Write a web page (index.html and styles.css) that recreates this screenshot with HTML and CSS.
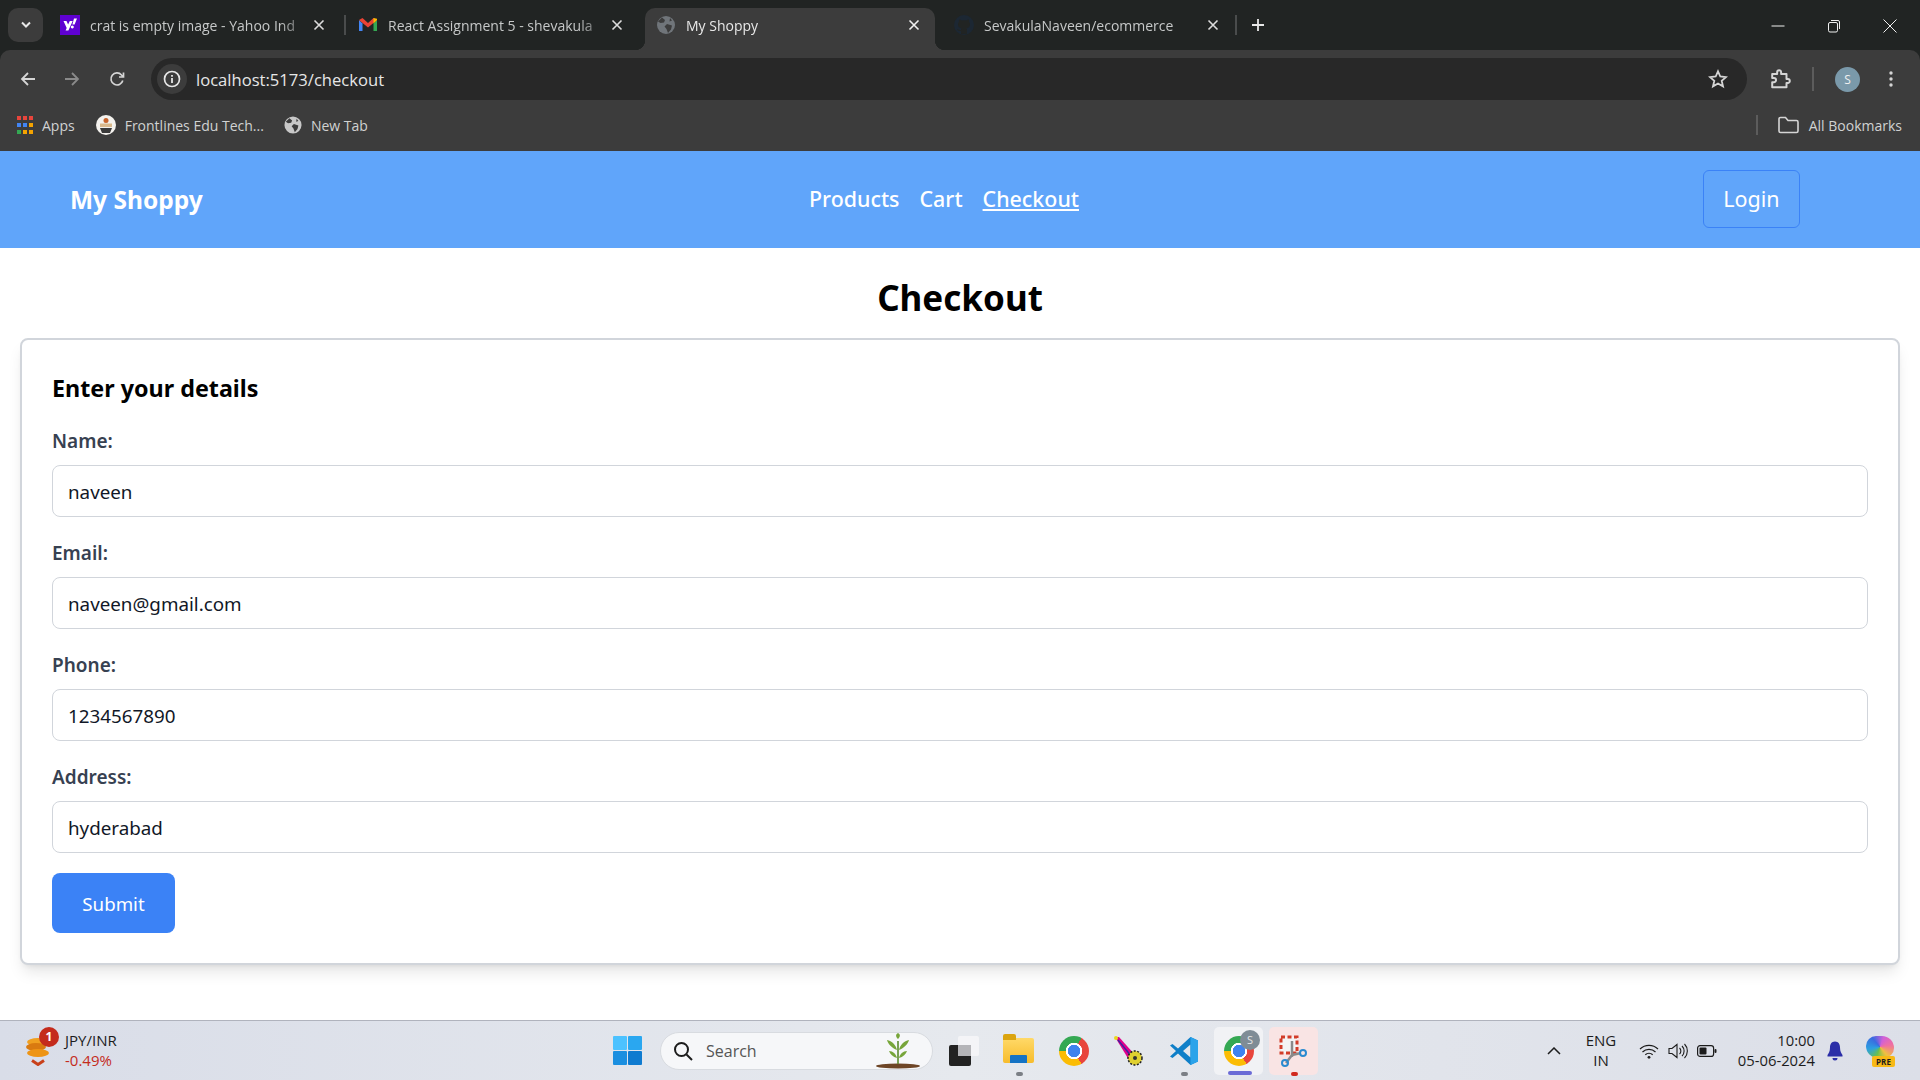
FILE: index.html
```html
<!DOCTYPE html>
<html lang="en">
<head>
    <meta name="viewport" content="width=device-width, initial-scale=1">
    <title>My Shoppy</title>
    <link rel="stylesheet" href="styles.css">
</head>

<body>

    <!-- browser tabs -->
    <div class="tab-strip">
        <div class="tab-search"><svg width="12" height="8" viewBox="0 0 12 8"><path d="M2 1.500 6 5.500 10 1.500" fill="none" stroke="#e8e8e8" stroke-width="2"/></svg></div>

        <div class="tab">
            <svg class="favicon" viewBox="0 0 20 20"><rect width="20" height="20" fill="#5f01d1"/><path d="M3.500 6h3l1.600 3.600L9.800 6h2.900L8.400 15.500H5.600l1.100-2.600z" fill="#fff"/><path d="M14 3.500h3l-2.400 6h-2.200zM12.300 10.500a1.500 1.500 0 1 0 .01 0z" fill="#fff"/></svg>
            <span class="tab-title">crat is empty image - Yahoo Ind</span>
            <svg class="tab-close" viewBox="0 0 12 12"><path d="M1.500 1.500 10.500 10.500M10.500 1.500 1.500 10.500" stroke="#dcdcdc" stroke-width="1.600"/></svg>
        </div>
        <div class="tab-sep"></div>
        <div class="tab">
            <svg class="favicon" viewBox="0 0 20 20"><path d="M1 5v11h3.500V8.500z" fill="#4285f4"/><path d="M15.500 8.500V16H19V5z" fill="#34a853"/><path d="M1 5 4.500 3 10 8 15.500 3 19 5 10 12.500z" fill="#ea4335"/><path d="M15.500 3 19 3.800V5l-3.500 3.500z" fill="#fbbc04"/></svg>
            <span class="tab-title">React Assignment 5 - shevakula</span>
            <svg class="tab-close" viewBox="0 0 12 12"><path d="M1.500 1.500 10.500 10.500M10.500 1.500 1.500 10.500" stroke="#dcdcdc" stroke-width="1.600"/></svg>
        </div>
        <div class="tab active">
            <svg class="favicon" viewBox="0 0 20 20"><circle cx="10" cy="10" r="9" fill="#70757a"/><path d="M6 2.500 9 5 8 7.500 4.500 8 2 6.500zM11 9l5 1.500-1 4-3 3.500-1.500-4-2-2.500zM14 3l2 2.500-2.500 1z" fill="#3c3c3c"/></svg>
            <span class="tab-title">My Shoppy</span>
            <svg class="tab-close" viewBox="0 0 12 12"><path d="M1.500 1.500 10.500 10.500M10.500 1.500 1.500 10.500" stroke="#f0f0f0" stroke-width="1.600"/></svg>
        </div>
        <div class="tab">
            <svg class="favicon" viewBox="0 0 20 20"><circle cx="10" cy="10" r="10" fill="#1c2733"/><path d="M7 19v-3c-2.500.5-3.500-1-4-2 1.500 0 1.800 1.500 4 1 0-1 .3-1.500.6-1.800C5 12.800 4 11.500 4 9.300c0-1 .3-1.800 1-2.500-.2-.6-.2-1.500.1-2.300 1 0 1.800.4 2.600 1a8 8 0 0 1 4.600 0c.8-.6 1.600-1 2.600-1 .3.800.3 1.700.1 2.300.7.700 1 1.500 1 2.500 0 2.200-1 3.500-3.600 3.900.4.400.6 1 .6 1.800v3.800z" fill="#212423"/></svg>
            <span class="tab-title">SevakulaNaveen/ecommerce</span>
            <svg class="tab-close" viewBox="0 0 12 12"><path d="M1.500 1.500 10.500 10.500M10.500 1.500 1.500 10.500" stroke="#dcdcdc" stroke-width="1.600"/></svg>
        </div>
        <div class="tab-sep last"></div>
        <svg class="new-tab" viewBox="0 0 14 14"><path d="M7 1v12M1 7h12" stroke="#e8e8e8" stroke-width="1.800"/></svg>

        <div class="window-btns">
            <svg viewBox="0 0 14 14"><path d="M0.500 7h13" stroke="#f0f0f0" stroke-width="1"/></svg>
            <svg viewBox="0 0 14 14"><rect x="1.500" y="3.500" width="9" height="9.500" rx="1.500" fill="none" stroke="#f0f0f0"/><path d="M4 1.500h7a1.500 1.500 0 0 1 1.500 1.500v7" fill="none" stroke="#f0f0f0"/></svg>
            <svg viewBox="0 0 14 14"><path d="M.5.500 13.500 13.500M13.500.500.500 13.500" stroke="#f0f0f0" stroke-width="1"/></svg>
        </div>
    </div>

    <!-- address bar and bookmarks -->
    <div class="browser-bar">
        <div class="toolbar">
            <svg class="tool-btn" viewBox="0 0 16 16"><path d="M15 8H2M8 2 2 8l6 6" fill="none" stroke="#d5d5d5" stroke-width="1.800"/></svg>
            <svg class="tool-btn" viewBox="0 0 16 16"><path d="M1 8h13M8 2l6 6-6 6" fill="none" stroke="#8a8a8a" stroke-width="1.800"/></svg>
            <svg class="tool-btn reload" viewBox="0 0 16 16"><path d="M13.800 9.500A6 6 0 1 1 12.500 4L14.500 6M14.500 1.500V6H10" fill="none" stroke="#d5d5d5" stroke-width="1.700"/></svg>
            <div class="address">
                <div class="site-info"><svg width="18" height="18" viewBox="0 0 18 18"><circle cx="9" cy="9" r="7.500" fill="none" stroke="#e6e6e6" stroke-width="1.700"/><path d="M9 8v5M9 5v1.800" stroke="#e6e6e6" stroke-width="1.800"/></svg></div>
                <span class="url">localhost:5173/checkout</span>
                <svg class="star" viewBox="0 0 20 20"><path d="M10 2.300 12.300 7.500l5.700.6-4.300 3.700 1.300 5.600L10 14.500l-5 2.900 1.300-5.600L2 8.100l5.700-.6z" fill="none" stroke="#d5d5d5" stroke-width="1.800"/></svg>
            </div>
            <svg class="ext-icon" viewBox="0 0 20 20"><path d="M2 6h4.500V4.300a1.800 1.800 0 0 1 3.600 0V6H15v4.500h1.200a1.800 1.800 0 0 1 0 3.600H15V18H2v-4.500h1.500a2 2 0 0 0 0-4H2z" transform="translate(0 -.5)" fill="none" stroke="#d5d5d5" stroke-width="1.800" stroke-linejoin="round"/></svg>
            <div class="tool-sep"></div>
            <div class="avatar">S</div>
            <svg class="dots" viewBox="0 0 4 18"><circle cx="2" cy="3" r="1.700" fill="#d5d5d5"/><circle cx="2" cy="9" r="1.700" fill="#d5d5d5"/><circle cx="2" cy="15" r="1.700" fill="#d5d5d5"/></svg>
        </div>

        <div class="bookmarks">
            <div class="bookmark apps">
                <svg width="16" height="18" viewBox="0 0 16 18"><g fill="#e8453c"><rect width="4" height="4"/><rect x="6" width="4" height="4"/><rect x="12" width="4" height="4"/></g><g fill="#4285f4"><rect y="7" width="4" height="4"/><rect x="6" y="7" width="4" height="4"/></g><rect x="12" y="7" width="4" height="4" fill="#f4a300"/><rect y="14" width="4" height="4" fill="#34a853"/><g fill="#f4a300"><rect x="6" y="14" width="4" height="4"/><rect x="12" y="14" width="4" height="4"/></g></svg>
                <span>Apps</span>
            </div>
            <div class="bookmark frontlines">
                <svg width="20" height="20" viewBox="0 0 20 20"><circle cx="10" cy="10" r="10" fill="#f4f2ee"/><circle cx="10" cy="5.500" r="2.500" fill="#c8642c"/><rect x="4" y="8.500" width="12" height="3.500" fill="#d9b98c"/><path d="M4 13h12l-2 5H6z" fill="#3a3a3a"/></svg>
                <span>Frontlines Edu Tech...</span>
            </div>
            <div class="bookmark newtab">
                <svg width="18" height="18" viewBox="0 0 20 20"><circle cx="10" cy="10" r="9.500" fill="#c8c8c8"/><path d="M6 2.500 9 5 8 7.500 4.500 8 2 6.500zM11 9l5 1.500-1 4-3 3.500-1.500-4-2-2.500zM14 3l2 2.500-2.500 1z" fill="#3c3c3c"/></svg>
                <span>New Tab</span>
            </div>
            <div class="all-bookmarks">
                <div class="tool-sep"></div>
                <svg width="21" height="18" viewBox="0 0 21 18"><path d="M1 3a1.500 1.500 0 0 1 1.500-1.500h5L10 4.500h8.500A1.500 1.500 0 0 1 20 6v9a1.500 1.500 0 0 1-1.500 1.500h-16A1.500 1.500 0 0 1 1 15z" fill="none" stroke="#d5d5d5" stroke-width="1.600"/></svg>
                <span>All Bookmarks</span>
            </div>
        </div>
    </div>

    <!-- the page itself -->
    <nav class="navbar">
        <a class="brand">My Shoppy</a>
        <div class="nav-links">
            <a>Products</a>
            <a>Cart</a>
            <a class="current">Checkout</a>
        </div>
        <button class="login-btn">Login</button>
    </nav>

    <main class="content">
        <h1>Checkout</h1>
        <form class="checkout-card">
            <h2>Enter your details</h2>
            <div class="field">
                <label for="name">Name:</label>
                <input id="name" type="text" value="naveen">
            </div>
            <div class="field">
                <label for="email">Email:</label>
                <input id="email" type="text" value="naveen@gmail.com">
            </div>
            <div class="field">
                <label for="phone">Phone:</label>
                <input id="phone" type="text" value="1234567890">
            </div>
            <div class="field">
                <label for="address">Address:</label>
                <input id="address" type="text" value="hyderabad">
            </div>
            <button type="button" class="submit-btn">Submit</button>
        </form>
    </main>

    <!-- windows taskbar -->
    <footer class="taskbar">
        <div class="ticker">
            <div class="coins">
                <svg width="24" height="30" viewBox="0 0 24 30"><ellipse cx="12" cy="6" rx="11" ry="4" fill="#f0a020"/><ellipse cx="10" cy="11" rx="10" ry="4" fill="#d97a10"/><ellipse cx="12" cy="17" rx="11" ry="4" fill="#ee9414"/><path d="M6 24.500 12 28.500 18 24.500" fill="none" stroke="#c8401a" stroke-width="3"/></svg>
                <span class="badge">1</span>
            </div>
            <div class="ticker-text">
                <span>JPY/INR</span>
                <span class="down">-0.49%</span>
            </div>
        </div>

        <div class="task-icons">
            <svg class="win-logo" viewBox="0 0 29 29"><rect width="14" height="14" rx="1" fill="#4cc2ff"/><rect x="15" width="14" height="14" rx="1" fill="#2aa7f0"/><rect y="15" width="14" height="14" rx="1" fill="#1b8fe0"/><rect x="15" y="15" width="14" height="14" rx="1" fill="#0f7bd0"/></svg>
            <div class="search-box">
                <svg width="20" height="20" viewBox="0 0 20 20"><circle cx="8.500" cy="8.500" r="6.500" fill="none" stroke="#1c1c1c" stroke-width="2"/><path d="M13.500 13.500 19 19" stroke="#1c1c1c" stroke-width="2"/></svg>
                <span>Search</span>
                <svg class="plant" width="46" height="36" viewBox="0 0 46 36"><ellipse cx="23" cy="33" rx="22" ry="2.500" fill="#6d4526"/><path d="M23 31V8" stroke="#5c8a2c" stroke-width="1.600"/><path d="M23 6c-3-3-2-5 0-6 2 1 3 3 0 6zM22 17C17 15 13 11 12 7c5 1 9 5 10 10zM24 17c1-5 5-9 10-10-1 4-5 8-10 10zM22 25c-4-1-7-4-8-7 4 0 7 3 8 7zM24 25c1-4 4-7 8-7-1 3-4 6-8 7z" fill="#77a53a"/></svg>
            </div>
            <div class="task-view"><span class="back"></span><span class="front"></span></div>

            <div class="task-app"><div class="folder"><span class="folder-tab"></span><span class="folder-slot"></span></div><i class="dot"></i></div>
            <div class="task-app"><div class="chrome"></div></div>
            <div class="task-app">
                <svg width="30" height="30" viewBox="0 0 30 30"><path d="M1 1 5 1 21 19 15 24z" fill="#e0008c"/><path d="M4 4 18 21" stroke="#4020a0" stroke-width="1.500"/><circle cx="2" cy="2" r="2" fill="#e8d820"/><circle cx="21" cy="22" r="7" fill="#e0d030" stroke="#222" stroke-width="1.500" stroke-dasharray="2 1.500"/><circle cx="21" cy="22" r="2" fill="#333"/></svg>
            </div>
            <div class="task-app">
                <svg width="30" height="30" viewBox="0 0 30 30"><path d="M21.500 1 29 4.500v21L21.500 29 9 17.500 3.500 22 1 20.500 7 15 1 9.500 3.500 8 9 12.500zM21.500 8.500 14 15l7.500 6.500z" fill="#0f7fc8" fill-rule="evenodd"/><path d="M21.500 1 29 4.500v21L21.500 29z" fill="#2aa3ea"/></svg>
                <i class="dot"></i>
            </div>
            <div class="task-app boxed">
                <div class="chrome"></div>
                <span class="chrome-badge">S</span>
                <i class="bar"></i>
            </div>
            <div class="task-app boxed snip">
                <svg width="30" height="32" viewBox="0 0 30 32"><rect x="2" y="2" width="16" height="16" fill="#f4f4f4" stroke="#d23c28" stroke-width="3" stroke-dasharray="4 2.500"/><path d="M13 6v16M13 20l-6 8M13 20l9-2" stroke="#8a8a8a" stroke-width="2.500" fill="none"/><circle cx="6" cy="28" r="3" fill="none" stroke="#2a8ad0" stroke-width="2"/><circle cx="24" cy="18" r="3" fill="none" stroke="#2a8ad0" stroke-width="2"/></svg>
                <i class="dot red"></i>
            </div>
        </div>

        <div class="tray">
            <svg class="tray-up" width="14" height="8" viewBox="0 0 14 8"><path d="M1 7 7 1l6 6" fill="none" stroke="#1c1c1c" stroke-width="1.500"/></svg>
            <div class="lang"><span>ENG</span><span>IN</span></div>
            <svg class="tray-icon wifi" width="20" height="16" viewBox="0 0 20 16"><path d="M1 6a13 13 0 0 1 18 0M3.500 9a9.500 9.500 0 0 1 13 0M6.300 11.700a5.500 5.500 0 0 1 7.400 0" fill="none" stroke="#1c1c1c" stroke-width="1.200"/><circle cx="10" cy="14.300" r="1.400" fill="#1c1c1c"/></svg>
            <svg class="tray-icon" width="20" height="16" viewBox="0 0 20 16"><path d="M1 5.500h3L9 1.500v13l-5-4H1z" fill="none" stroke="#1c1c1c" stroke-width="1.100"/><path d="M11.500 5a4 4 0 0 1 0 6M14 3a7 7 0 0 1 0 10M16.500 1a10 10 0 0 1 0 14" fill="none" stroke="#1c1c1c" stroke-width="1.100"/></svg>
            <svg class="tray-icon" width="20" height="12" viewBox="0 0 20 12"><rect x=".6" y=".6" width="16" height="10.800" rx="2.500" fill="none" stroke="#1c1c1c" stroke-width="1.200"/><rect x="2.500" y="2.500" width="7" height="7" rx="1" fill="#1c1c1c"/><rect x="17.500" y="4" width="2" height="4" rx="1" fill="#1c1c1c"/></svg>
            <div class="clock"><span>10:00</span><span>05-06-2024</span></div>
            <svg class="bell" width="16" height="20" viewBox="0 0 16 20"><path d="M8 .5C4.500.5 3 3.300 3 6.500c0 4-1.500 6-2.500 7.500v1.500h15V14c-1-1.500-2.500-3.500-2.500-7.500C13 3.300 11.500.5 8 .5zM5.500 17a2.500 2.500 0 0 0 5 0z" fill="#2b2ea8"/></svg>
            <div class="copilot">
                <span class="blob"></span>
                <span class="pre">PRE</span>
            </div>
        </div>
    </footer>

</body>
</html>
```

FILE: styles.css
```css
* {
    box-sizing: border-box;
}

body {
    margin: 0;
    height: 100vh;
    overflow: hidden;
    display: flex;
    flex-direction: column;
    font-family: 'Noto Sans', sans-serif;
    background-color: #212423;
}

/* ---- browser chrome ---- */

.tab-strip {
    height: 50px;
    flex-shrink: 0;
    display: flex;
    align-items: flex-end;
    padding-left: 8px;
    background-color: #212423;
    font-family: 'Open Sans', sans-serif;
    color: #c6c8c8;
}

.tab-search {
    width: 35px;
    height: 34px;
    margin: 0 3px 8px 0;
    display: flex;
    align-items: center;
    justify-content: center;
    border-radius: 10px;
    background-color: #3c3c3c;
}

.tab {
    width: 298px;
    height: 42px;
    display: flex;
    align-items: center;
    padding: 0 19px 8px 14px;
    font-size: 14px;
}

.tab.active {
    position: relative;
    width: 290px;
    margin: 0 5px 0 3px;
    padding-left: 11px;
    padding-right: 15px;
    border-radius: 10px 10px 0 0;
    background-color: #3c3c3c;
    color: #e8e8e8;
}

.tab.active::before,
.tab.active::after {
    content: "";
    position: absolute;
    bottom: 0;
    width: 10px;
    height: 10px;
}

.tab.active::before {
    left: -10px;
    background: radial-gradient(circle at 0 0, transparent 10px, #3c3c3c 10.500px);
}

.tab.active::after {
    right: -10px;
    background: radial-gradient(circle at 100% 0, transparent 10px, #3c3c3c 10.500px);
}

.favicon {
    width: 20px;
    height: 20px;
    flex-shrink: 0;
}

.tab-title {
    flex: 1;
    margin: 0 8px 0 10px;
    white-space: nowrap;
    -webkit-mask-image: linear-gradient(to right, black 88%, rgba(0, 0, 0, 0.25) 100%);
    mask-image: linear-gradient(to right, black 88%, rgba(0, 0, 0, 0.25) 100%);
}

.tab-close {
    width: 12px;
    height: 12px;
    flex-shrink: 0;
}

.tab-sep {
    width: 2px;
    height: 20px;
    margin: 0 -2px 15px 0;
    background-color: #4a4c4c;
}

.tab-sep.last {
    margin: 0 0 15px -3px;
}

.new-tab {
    width: 14px;
    height: 14px;
    margin: 0 0 18px 14px;
}

.window-btns {
    margin-left: auto;
    margin-bottom: 17px;
    padding-right: 23px;
    display: flex;
    gap: 42px;
}

.window-btns svg {
    width: 14px;
    height: 14px;
}

.browser-bar {
    flex-shrink: 0;
    height: 101px;
    border-radius: 10px 10px 0 0;
    background-color: #3c3c3c;
    font-family: 'Open Sans', sans-serif;
}

.toolbar {
    height: 50px;
    display: flex;
    align-items: center;
    padding: 8px 20px 0 20px;
}

.tool-btn {
    width: 16px;
    height: 16px;
    margin-right: 28px;
}

.tool-btn.reload {
    margin-left: 1px;
    margin-right: 27px;
}

.address {
    width: 1596px;
    height: 42px;
    margin-left: -1px;
    display: flex;
    align-items: center;
    padding: 0 19px 0 6px;
    border-radius: 21px;
    background-color: #282828;
}

.site-info {
    width: 30px;
    height: 30px;
    display: flex;
    align-items: center;
    justify-content: center;
    border-radius: 50%;
    background-color: #3c3c3c;
}

.url {
    margin-left: 9px;
    font-size: 16.600px;
    color: #e6e6e6;
}

.star {
    width: 20px;
    height: 20px;
    margin-left: auto;
}

.ext-icon {
    width: 22px;
    height: 22px;
    margin-left: 23px;
}

.tool-sep {
    width: 2px;
    height: 24px;
    background-color: #5c5c5c;
}

.toolbar .tool-sep {
    margin-left: 20px;
}

.avatar {
    width: 25px;
    height: 25px;
    margin-left: 21px;
    display: flex;
    align-items: center;
    justify-content: center;
    border-radius: 50%;
    background-color: #7a99aa;
    color: #f0f0f0;
    font-size: 12px;
}

.dots {
    width: 4px;
    height: 18px;
    margin-left: 29px;
}

.bookmarks {
    height: 51px;
    display: flex;
    align-items: center;
    padding: 0 18px 1px 17px;
    font-size: 14px;
    color: #d0d2d2;
}

.bookmark {
    display: flex;
    align-items: center;
    gap: 9px;
}

.frontlines {
    margin-left: 21px;
}

.newtab {
    margin-left: 20px;
}

.all-bookmarks {
    margin-left: auto;
    display: flex;
    align-items: center;
    gap: 10px;
}

.all-bookmarks .tool-sep {
    height: 20px;
    margin-right: 10px;
}

/* ---- navbar ---- */

.navbar {
    flex-shrink: 0;
    height: 97px;
    display: flex;
    align-items: center;
    padding: 0 120px 2px 70px;
    background-color: #60a5fa;
    color: white;
}

.brand {
    width: 739px;
    margin-top: 2px;
    font-size: 24.500px;
    font-weight: 700;
}

.nav-links {
    display: flex;
    gap: 20px;
    font-size: 21.400px;
    font-weight: 500;
}

.nav-links .current {
    text-decoration: underline;
}

.login-btn {
    width: 97px;
    height: 58px;
    margin-left: auto;
    border: 1px solid #3b82f6;
    border-radius: 6px;
    background-color: #60a5fa;
    color: white;
    font-family: inherit;
    font-size: 21.500px;
}

/* ---- checkout form ---- */

.content {
    flex: 1;
    padding: 0 20px;
    background-color: white;
}

h1 {
    margin: 29px 0 19px 0;
    text-align: center;
    font-size: 35px;
    line-height: 42px;
    font-weight: 700;
    color: black;
}

.checkout-card {
    padding: 30px;
    border: 2px solid #d1d5db;
    border-radius: 8px;
    background-color: white;
    box-shadow: 0 10px 15px -3px rgba(0, 0, 0, 0.1), 0 4px 6px -4px rgba(0, 0, 0, 0.1);
}

h2 {
    margin: 2px 0 21px 0;
    font-size: 23.300px;
    line-height: 32px;
    font-weight: 700;
    color: black;
}

.field {
    margin-bottom: 20px;
}

.field label {
    display: block;
    margin-bottom: 8px;
    font-size: 19px;
    line-height: 32px;
    font-weight: 600;
    color: #374151;
}

.field input {
    display: block;
    width: 100%;
    height: 52px;
    padding: 1px 15px 0 15px;
    border: 1px solid #d1d5db;
    border-radius: 8px;
    font-family: inherit;
    font-size: 18.800px;
    color: #111827;
}

.submit-btn {
    display: block;
    width: 123px;
    height: 60px;
    border: none;
    border-radius: 8px;
    background-color: #3b82f6;
    color: white;
    font-family: inherit;
    font-size: 18.700px;
}

/* ---- taskbar ---- */

.taskbar {
    flex-shrink: 0;
    height: 60px;
    display: flex;
    align-items: center;
    border-top: 1px solid #b0b3bd;
    background: linear-gradient(to right, #d9dde8, #e6e9ee 50%, #dcdfe8);
    font-family: 'Open Sans', sans-serif;
    color: #1c1c1c;
}

.ticker {
    width: 613px;
    display: flex;
    align-items: center;
    padding-left: 26px;
    gap: 15px;
}

.coins {
    position: relative;
    width: 24px;
    height: 30px;
}

.badge {
    position: absolute;
    top: -9px;
    left: 13px;
    width: 20px;
    height: 20px;
    border-radius: 50%;
    background-color: #c42b1c;
    color: white;
    font-size: 12px;
    font-weight: 700;
    line-height: 20px;
    text-align: center;
}

.ticker-text {
    display: flex;
    flex-direction: column;
    margin-top: -2px;
    font-size: 15px;
    line-height: 20px;
}

.down {
    color: #c42b1c;
}

.task-icons {
    display: flex;
    align-items: center;
}

.win-logo {
    width: 29px;
    height: 29px;
}

.search-box {
    width: 273px;
    height: 38px;
    margin-left: 18px;
    display: flex;
    align-items: center;
    gap: 13px;
    padding: 0 11px 0 12px;
    border: 1px solid #d8dbe0;
    border-radius: 19px;
    background-color: #f6f7f9;
    font-size: 16px;
    color: #555;
}

.plant {
    margin-left: auto;
}

.task-view {
    position: relative;
    width: 30px;
    height: 30px;
    margin: 0 12px 0 16px;
}

.task-view .back {
    position: absolute;
    top: 0;
    right: 0;
    width: 21px;
    height: 20px;
    border-radius: 2px;
    background-color: #f6f6f8;
}

.task-view .front {
    position: absolute;
    left: 0;
    bottom: 0;
    width: 22px;
    height: 21px;
    border-radius: 2px;
    background: linear-gradient(#222, #222) 0 100% / 100% 100% no-repeat;
}

.task-view .back::after {
    content: "";
    position: absolute;
    left: 0;
    bottom: 0;
    width: 13px;
    height: 11px;
    background-color: #b4b4b8;
}

.task-view .back {
    z-index: 1;
    background-color: rgba(246, 246, 248, 0.85);
}

.task-app {
    position: relative;
    width: 49px;
    height: 48px;
    margin: 0 3px;
    display: flex;
    align-items: center;
    justify-content: center;
}

.task-app.boxed {
    margin: 0 3px;
    border-radius: 5px;
    background-color: #f1f2f5;
}

.task-app.snip {
    background-color: #f9e4e4;
}

.dot {
    position: absolute;
    left: 50%;
    bottom: -1px;
    width: 7px;
    height: 4px;
    margin-left: -3px;
    border-radius: 2px;
    background-color: #7b7f85;
}

.dot.red {
    background-color: #d1291e;
}

.bar {
    position: absolute;
    left: 14px;
    bottom: 0;
    width: 24px;
    height: 4px;
    border-radius: 2px;
    background-color: #6b6bd6;
}

.folder {
    position: relative;
    width: 31px;
    height: 25px;
    border-radius: 2px;
    background: linear-gradient(#ffd968, #f7bc2c);
}

.folder-tab {
    position: absolute;
    top: -4px;
    left: 0;
    width: 13px;
    height: 6px;
    border-radius: 2px 2px 0 0;
    background-color: #dba40e;
}

.folder-slot {
    position: absolute;
    left: 7px;
    bottom: 0;
    width: 17px;
    height: 8px;
    border-radius: 1px 1px 0 0;
    background-color: #1573c4;
}

.chrome {
    width: 30px;
    height: 30px;
    border-radius: 50%;
    background:
        radial-gradient(circle, #3f83ee 0 6px, white 6.500px 8px, transparent 8.500px),
        conic-gradient(from 30deg, #e8453c 0 120deg, #fbbc04 120deg 240deg, #34a853 240deg 360deg);
}

.chrome-badge {
    position: absolute;
    top: 3px;
    right: 3px;
    width: 20px;
    height: 20px;
    border-radius: 50%;
    background-color: #7f8c96;
    color: #e6e6e6;
    font-size: 11px;
    line-height: 20px;
    text-align: center;
}

.tray {
    flex: 1;
    display: flex;
    align-items: center;
    padding-left: 226px;
}

.tray-up {
    margin-right: 25px;
}

.lang {
    width: 30px;
    display: flex;
    flex-direction: column;
    align-items: center;
    margin-top: -2px;
    font-size: 15px;
    line-height: 20px;
}

.tray-icon {
    margin-left: 9px;
}

.wifi {
    margin-left: 23px;
}

.clock {
    width: 98px;
    display: flex;
    flex-direction: column;
    align-items: flex-end;
    margin-top: -2px;
    font-size: 14.800px;
    line-height: 20px;
}

.bell {
    margin-left: 12px;
}

.copilot {
    position: relative;
    width: 30px;
    height: 32px;
    margin-left: 22px;
}

.copilot .blob {
    position: absolute;
    top: 1px;
    left: 1px;
    width: 28px;
    height: 22px;
    border-radius: 10px 12px 10px 12px;
    background: conic-gradient(from 200deg, #6ac04a, #2ca0e0, #3a6ae0, #d060d8, #f070a0, #f0c040, #6ac04a);
}

.copilot .pre {
    position: absolute;
    bottom: 0;
    left: 7px;
    width: 23px;
    height: 11px;
    border-radius: 2px;
    background-color: #f7b916;
    color: #1c1c1c;
    font-size: 8px;
    font-weight: 700;
    line-height: 11px;
    text-align: center;
}
```
